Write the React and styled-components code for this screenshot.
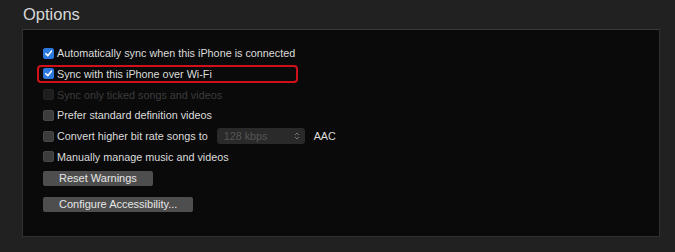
import React from "react";
import styled, { createGlobalStyle } from "styled-components";

const GlobalStyle = createGlobalStyle`
  html, body {
    margin: 0;
    padding: 0;
    background: #212121;
    font-family: "Liberation Sans", Arial, sans-serif;
  }
`;

const options = [
  { label: "Automatically sync when this iPhone is connected", checked: true },
  { label: "Sync with this iPhone over Wi-Fi", checked: true, highlight: true },
  { label: "Sync only ticked songs and videos", disabled: true },
  { label: "Prefer standard definition videos" },
  { label: "Convert higher bit rate songs to", bitrate: true },
  { label: "Manually manage music and videos" },
];

const App = () => {
  return (
    <Page>
      <GlobalStyle />
      <Title>Options</Title>
      <Panel>
        <List>
          {options.map((option) => (
            <Row key={option.label} $highlight={option.highlight}>
              <Box $checked={option.checked} $disabled={option.disabled}>
                {option.checked && (
                  <svg width="9" height="9" viewBox="0 0 10 10">
                    <path
                      d="M2 5.2 L4.2 7.4 L8.2 2.4"
                      fill="none"
                      stroke="#fff"
                      strokeWidth="1.7"
                      strokeLinecap="round"
                      strokeLinejoin="round"
                    />
                  </svg>
                )}
              </Box>
              <Label $disabled={option.disabled}>{option.label}</Label>
              {option.bitrate && (
                <>
                  <Select>
                    128 kbps
                    <svg width="6" height="10" viewBox="0 0 6 10">
                      <path
                        d="M1 4 L3 2 L5 4 M1 6 L3 8 L5 6"
                        fill="none"
                        stroke="#777"
                        strokeWidth="1"
                      />
                    </svg>
                  </Select>
                  <Label>AAC</Label>
                </>
              )}
            </Row>
          ))}
        </List>
        <Buttons>
          <Button>Reset Warnings</Button>
          <Button>Configure Accessibility...</Button>
        </Buttons>
      </Panel>
    </Page>
  );
};

export default App;

const Page = styled.div`
  width: 675px;
  height: 252px;
  box-sizing: border-box;
  padding: 4px 15px 0 22px;
  overflow: hidden;
`;

const Title = styled.div`
  color: #d8d8d8;
  font-size: 16.5px;
  line-height: 20px;
  margin-left: 1px;
  margin-bottom: 5px;
`;

const Panel = styled.div`
  width: 638px;
  height: 208px;
  box-sizing: border-box;
  background: #0a0a0a;
  border: 1px solid #303030;
  border-top-color: #3a3a3a;
  padding: 14px 0 0 14px;
`;

const List = styled.div`
  display: flex;
  flex-direction: column;
  gap: 2.75px;
`;

const Row = styled.div`
  display: flex;
  align-items: center;
  align-self: flex-start;
  height: 18px;
  min-width: ${(p) => (p.$highlight ? "261px" : "0")};
  box-sizing: border-box;
  padding-left: 4px;
  border: 2px solid ${(p) => (p.$highlight ? "#d0111c" : "transparent")};
  border-radius: 4px;
  white-space: nowrap;
`;

const Box = styled.span`
  width: 11px;
  height: 11px;
  box-sizing: border-box;
  border-radius: 2px;
  margin-right: 3px;
  display: flex;
  align-items: center;
  justify-content: center;
  flex-shrink: 0;
  background: ${(p) =>
    p.$checked ? "#2b78de" : p.$disabled ? "#1e1e1e" : "#3c3c3c"};
  border: 1px solid
    ${(p) => (p.$checked ? "#2b78de" : p.$disabled ? "#242424" : "#484848")};
`;

const Label = styled.span`
  font-size: 10.8px;
  color: ${(p) => (p.$disabled ? "#3c3c3c" : "#dcdcdc")};
`;

const Select = styled.span`
  display: flex;
  align-items: center;
  justify-content: space-between;
  width: 88px;
  height: 16px;
  box-sizing: border-box;
  margin: 0 9px 0 9px;
  padding: 0 5px 0 7px;
  background: #2a2a2a;
  border-radius: 3px;
  font-size: 10.8px;
  color: #555;
`;

const Buttons = styled.div`
  display: flex;
  flex-direction: column;
  align-items: flex-start;
  gap: 11px;
  margin-top: 5px;
  padding-left: 6px;
`;

const Button = styled.button`
  height: 15px;
  padding: 0 16px;
  border: none;
  border-radius: 2px;
  background: #4e4e4e;
  color: #e6e6e6;
  font-family: "Liberation Sans", Arial, sans-serif;
  font-size: 11px;
  line-height: 15px;
`;
